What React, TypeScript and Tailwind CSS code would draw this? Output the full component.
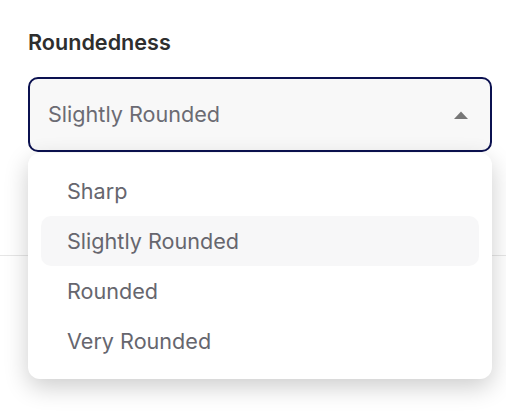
import React from "react";

const options = ["Sharp", "Slightly Rounded", "Rounded", "Very Rounded"];

export default function App() {
  const selected = "Slightly Rounded";

  return (
    <div className="min-h-screen bg-white font-['Inter',sans-serif]">
      <div className="h-[256px] border-b border-[#e6e6e6] pl-7 pr-[14px] pt-[28px]">
        <div className="text-[21.6px] leading-[28px] font-semibold text-[#2e2e2e]">Roundedness</div>
        <div className="relative mt-[21px]">
          <button className="flex h-[75px] w-full items-center justify-between rounded-[10px] border-2 border-[#0b1150] bg-[#f8f8f8] pl-[18px] pr-[21px] text-left">
            <span className="text-[21.6px] text-[#6b6b73]">{selected}</span>
            <svg width="16" height="8" viewBox="0 0 16 8">
              <path d="M1 8 L8 0.5 L15 8 Z" fill="#777777" />
            </svg>
          </button>
          <div className="absolute left-0 right-0 top-full z-10 mt-px rounded-[12px] bg-white p-[13px] shadow-[0_8px_24px_rgba(0,0,0,0.2)]">
            {options.map((opt) => (
              <div
                key={opt}
                className={
                  "flex h-[50px] items-center rounded-[10px] pl-[26px] text-[21.6px] text-[#66666e] " +
                  (opt === selected ? "bg-[#f7f7f8]" : "")
                }
              >
                {opt}
              </div>
            ))}
          </div>
        </div>
      </div>
    </div>
  );
}
